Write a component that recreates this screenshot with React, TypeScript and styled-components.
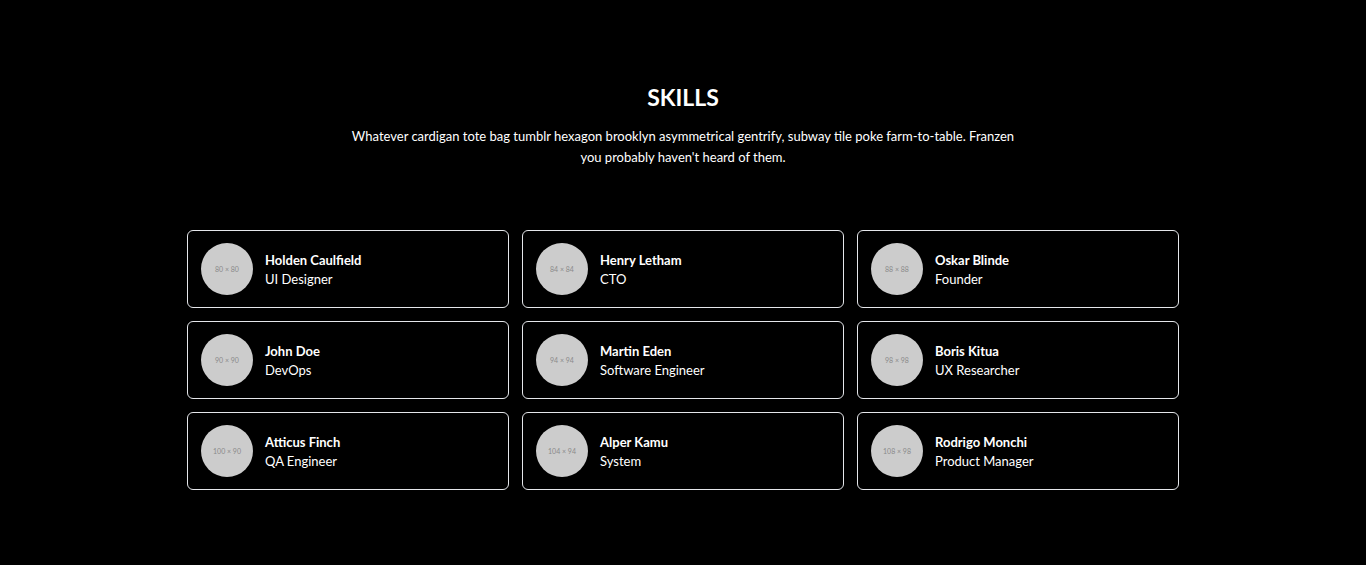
import styled, { createGlobalStyle } from "styled-components";

type Member = {
    name: string;
    role: string;
    size: string;
};

const members: Member[] = [
    { name: "Holden Caulfield", role: "UI Designer", size: "80 × 80" },
    { name: "Henry Letham", role: "CTO", size: "84 × 84" },
    { name: "Oskar Blinde", role: "Founder", size: "88 × 88" },
    { name: "John Doe", role: "DevOps", size: "90 × 90" },
    { name: "Martin Eden", role: "Software Engineer", size: "94 × 94" },
    { name: "Boris Kitua", role: "UX Researcher", size: "98 × 98" },
    { name: "Atticus Finch", role: "QA Engineer", size: "100 × 90" },
    { name: "Alper Kamu", role: "System", size: "104 × 94" },
    { name: "Rodrigo Monchi", role: "Product Manager", size: "108 × 98" },
];

const GlobalStyle = createGlobalStyle`
    html, body {
        margin: 0;
        padding: 0;
        background-color: #000;
    }
    body {
        font-family: Lato, "Noto Sans", sans-serif;
        color: #fff;
    }
`;

const Section = styled.section`
    min-height: 565px;
    background-color: #000;
    padding-top: 81px;
    box-sizing: border-box;
`;

const Container = styled.div`
    width: 992px;
    margin: 0 auto;
`;

const Header = styled.div`
    display: flex;
    flex-direction: column;
    align-items: center;
    text-align: center;
    margin-bottom: 62px;
`;

const Title = styled.h1`
    margin: 0 0 13px;
    font-size: 23px;
    line-height: 32px;
    font-weight: 700;
    color: #fff;
`;

const Lead = styled.p`
    margin: 0;
    width: 670px;
    font-size: 13px;
    line-height: 21px;
    color: #fff;
`;

const Grid = styled.div`
    display: grid;
    grid-template-columns: repeat(3, 1fr);
    column-gap: 13px;
    row-gap: 13px;
`;

const Card = styled.div`
    display: flex;
    align-items: center;
    height: 78px;
    padding: 0 13px;
    box-sizing: border-box;
    border: 1px solid #e5e7eb;
    border-radius: 6px;
`;

const Avatar = styled.div`
    width: 52px;
    height: 52px;
    flex-shrink: 0;
    border-radius: 50%;
    background-color: #cccccc;
    color: #8a8a8a;
    font-size: 7px;
    display: flex;
    align-items: center;
    justify-content: center;
    margin-right: 12px;
`;

const Info = styled.div`
    display: flex;
    flex-direction: column;
    padding-top: 2px;
`;

const Name = styled.h2`
    margin: 0;
    font-size: 13px;
    line-height: 19px;
    font-weight: 700;
    color: #fff;
`;

const Role = styled.p`
    margin: 0;
    font-size: 13px;
    line-height: 19px;
    color: #fff;
`;

const App = () => {
    return (
        <>
            <GlobalStyle />
            <Section>
                <Container>
                    <Header>
                        <Title>SKILLS</Title>
                        <Lead>
                            Whatever cardigan tote bag tumblr hexagon brooklyn asymmetrical gentrify, subway tile poke farm-to-table. Franzen you probably haven't heard of them.
                        </Lead>
                    </Header>
                    <Grid>
                        {members.map((m) => (
                            <Card key={m.name}>
                                <Avatar>{m.size}</Avatar>
                                <Info>
                                    <Name>{m.name}</Name>
                                    <Role>{m.role}</Role>
                                </Info>
                            </Card>
                        ))}
                    </Grid>
                </Container>
            </Section>
        </>
    );
};

export default App;
